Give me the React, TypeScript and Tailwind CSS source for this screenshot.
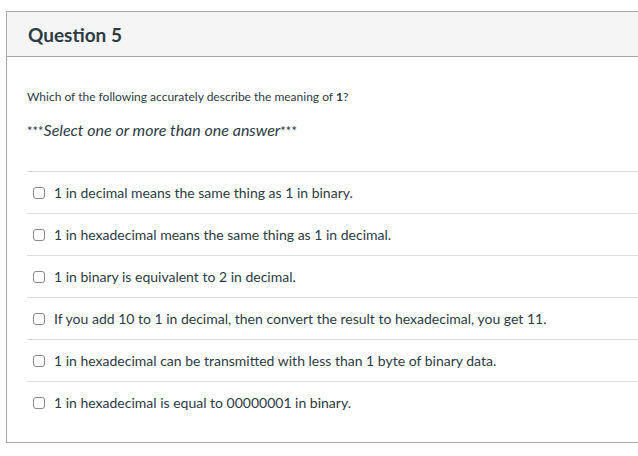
const answers = [
  '1 in decimal means the same thing as 1 in binary.',
  '1 in hexadecimal means the same thing as 1 in decimal.',
  '1 in binary is equivalent to 2 in decimal.',
  'If you add 10 to 1 in decimal, then convert the result to hexadecimal, you get 11.',
  '1 in hexadecimal can be transmitted with less than 1 byte of binary data.',
  '1 in hexadecimal is equal to 00000001 in binary.',
];

export default function App() {
  return (
    <div
      className="w-[638px] h-[456px] overflow-hidden bg-white pt-[11px] pl-[6px] text-[#2d3b45]"
      style={{ fontFamily: 'Lato, "Open Sans", sans-serif' }}
    >
      <div className="w-[700px] h-[432px] border border-[#aaaaaa] flex flex-col">
        <div className="h-[45px] bg-[#f5f5f5] border-b border-[#aaaaaa] flex items-center px-[21px]">
          <h2 className="text-[19px] font-bold leading-none">Question 5</h2>
        </div>
        <div className="pl-[20px]">
          <p className="mt-[31px] text-[12px] leading-[18px]">
            Which of the following accurately describe the meaning of <strong>1</strong>?
          </p>
          <p className="mt-[13px] text-[16px] leading-[22px]">
            <span className="text-[13px]">***</span>
            <em>Select one or more than one answer</em>
            <span className="text-[13px]">***</span>
          </p>
          <ul className="mt-[29px]">
            {answers.map((a) => (
              <li key={a} className="h-[42px] border-t border-[#dddddd] flex items-center pl-[6px]">
                <span className="w-[12px] h-[12px] rounded-[3px] border border-[#8a8a8a] bg-white shrink-0" />
                <span className="ml-[9px] text-[14px] leading-[20px]">{a}</span>
              </li>
            ))}
          </ul>
        </div>
      </div>
    </div>
  );
}
